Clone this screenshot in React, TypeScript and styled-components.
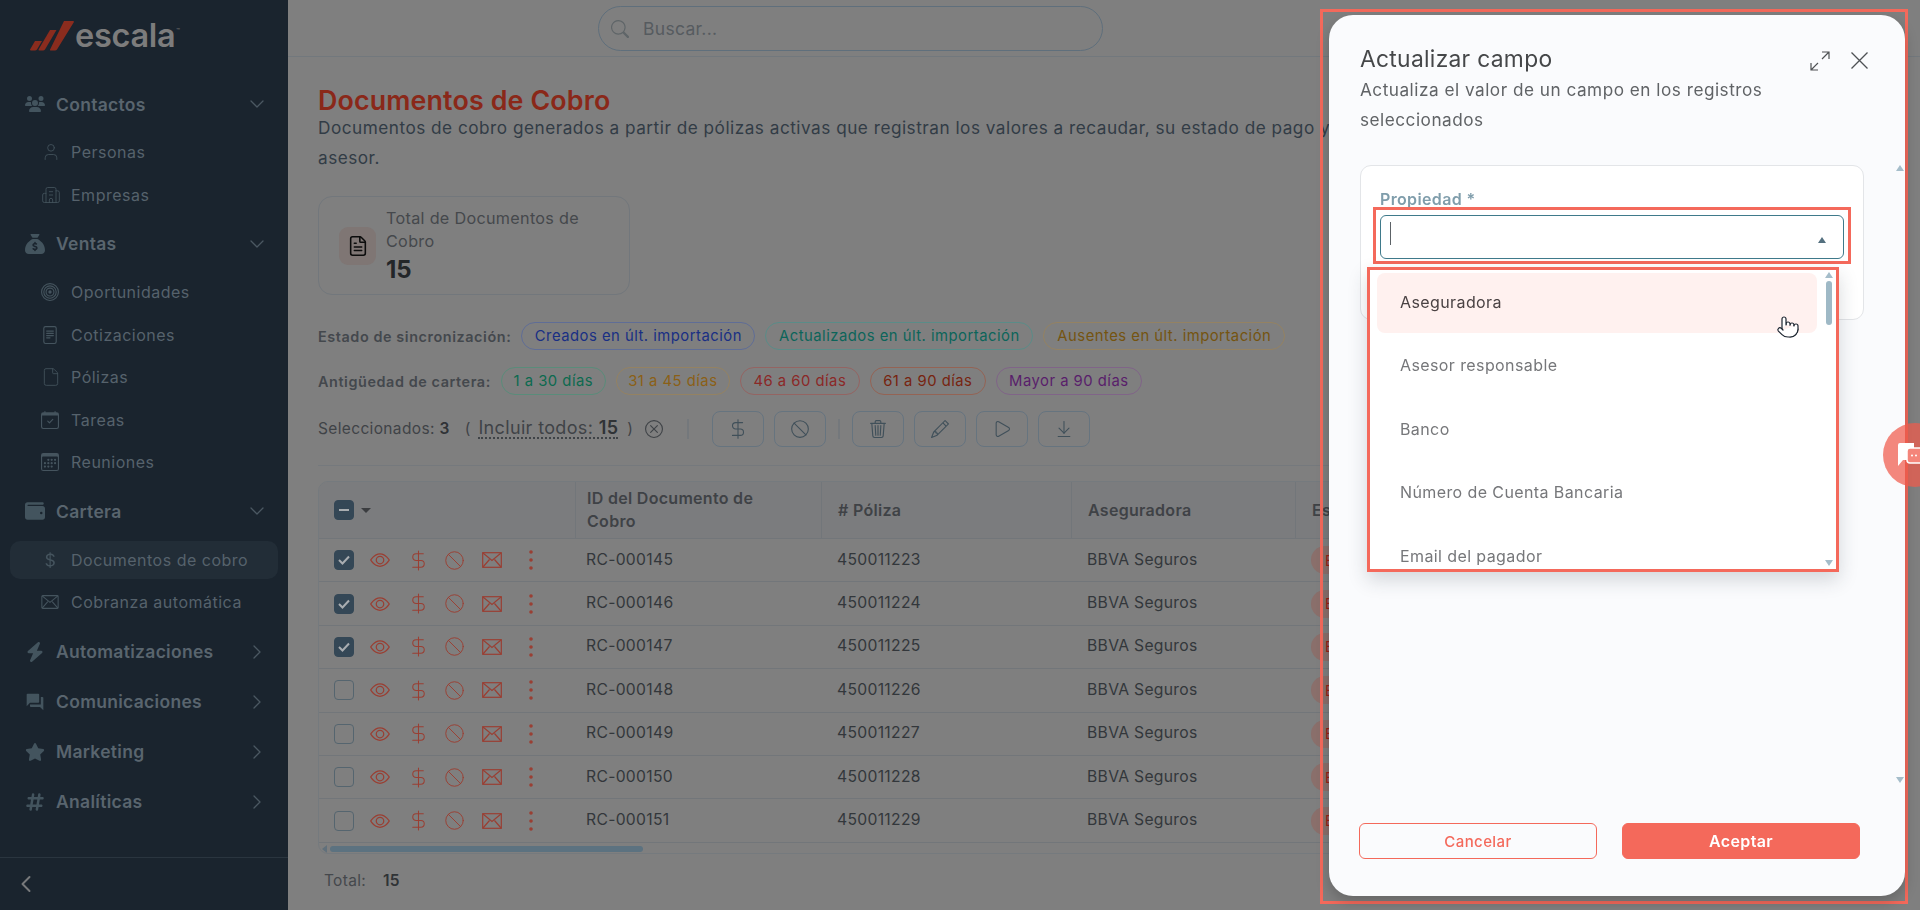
import React from 'react';
import styled, { createGlobalStyle } from 'styled-components';
import {
  BsBullseye, BsCalendar3, BsCalendarCheck, BsCurrencyDollar, BsEye, BsFileText, BsPencil, BsSearch, BsTrash3, BsXCircle,
} from 'react-icons/bs';
import { FaBolt, FaHashtag, FaSackDollar, FaStar, FaUsers, FaWallet } from 'react-icons/fa6';
import { MdForum } from 'react-icons/md';
import {
  ArrowDownToLine, Ban, Building2, ChevronDown, ChevronLeft, ChevronRight, DollarSign, File, FileText, Play, Pointer, User,
} from 'lucide-react';

const GlobalStyle = createGlobalStyle`
  html, body {
    margin: 0;
    height: 100%;
    overflow: hidden;
    background: #7f7f7f;
    font-family: Inter, "Liberation Sans", sans-serif;
  }
  * { box-sizing: border-box; }
`;

const Shell = styled.div`
  display: flex;
  width: 1920px;
  height: 910px;
  overflow: hidden;
`;

const Sidebar = styled.aside`
  width: 288px;
  flex: none;
  height: 910px;
  background: #1a242e;
  display: flex;
  flex-direction: column;
`;

const LogoRow = styled.div`
  height: 84px;
  padding: 21px 0 0 30px;
  display: flex;
  align-items: flex-start;
  gap: 1px;
`;

const LogoWord = styled.span`
  font-size: 32.5px;
  line-height: 31px;
  font-weight: 600;
  color: #7c7c7c;
  letter-spacing: -0.3px;
  margin-top: -1px;
`;

const LogoTm = styled.sup`
  font-size: 6px;
  line-height: 1;
  color: #7c7c7c;
  margin: 7px 0 0 0;
`;

const SectionRow = styled.div<{ $h: number; $mt?: number; $mb?: number }>`
  height: ${(p) => p.$h}px;
  margin: ${(p) => p.$mt ?? 0}px 0 ${(p) => p.$mb ?? 0}px;
  display: flex;
  align-items: center;
  padding: 0 19px 0 25px;
  color: #59656e;
  font-size: 17.5px;
  font-weight: 600;
`;

const SectionIcon = styled.span`
  width: 31px;
  display: flex;
  align-items: center;
  color: #43545e;
  font-size: 20px;
`;

const SectionLabel = styled.span`
  flex: 1;
  letter-spacing: 0.3px;
`;

const SubRow = styled.div<{ $active?: boolean }>`
  height: 38px;
  margin: 2px 10px 2.5px;
  padding: 0 0 0 31px;
  display: flex;
  align-items: center;
  border-radius: 10px;
  background: ${(p) => (p.$active ? '#222d37' : 'transparent')};
  color: #56626c;
  font-size: 16px;
  letter-spacing: 0.5px;
`;

const SubIcon = styled.span`
  width: 30px;
  display: flex;
  color: #45545e;
  font-size: 18px;
`;

const SideFooter = styled.div`
  margin-top: auto;
  height: 53px;
  border-top: 1px solid #2a353f;
  padding-left: 12px;
  display: flex;
  align-items: center;
  color: #77797b;
`;

const Main = styled.main`
  flex: 1;
  min-width: 0;
  background: #7f7f7f;
`;

const TopBar = styled.header`
  height: 57px;
  border-bottom: 1px solid #72787d;
  padding: 6px 0 0 310px;
`;

const SearchBox = styled.div`
  width: 505px;
  height: 45px;
  border: 1px solid #5f6f7c;
  border-radius: 23px;
  display: flex;
  align-items: center;
  gap: 14px;
  padding-left: 12px;
  color: #565b5f;
  font-size: 17.5px;
  letter-spacing: 0.3px;
`;

const Content = styled.div`
  padding: 28px 0 0 30px;
  width: 1632px;
`;

const Title = styled.h1`
  margin: 0;
  height: 30px;
  font-size: 26.8px;
  line-height: 30px;
  font-weight: 600;
  color: #8a2819;
  letter-spacing: 0.15px;
`;

const Description = styled.p`
  margin: -2px 0 0;
  white-space: nowrap;
  font-size: 17.2px;
  line-height: 30px;
  color: #323c46;
  letter-spacing: 0.5px;
`;

const StatCard = styled.div`
  margin-top: 23px;
  width: 312px;
  height: 99px;
  border: 1px solid #72777c;
  border-radius: 14px;
  display: flex;
  align-items: center;
  padding-left: 20px;
  gap: 10px;
`;

const StatIcon = styled.div`
  width: 37px;
  height: 38px;
  border-radius: 9px;
  background: #7f7674;
  color: #0c0c0c;
  display: flex;
  align-items: center;
  justify-content: center;
`;

const StatLabel = styled.div`
  width: 240px;
  font-size: 16.2px;
  line-height: 23px;
  color: #45484c;
  letter-spacing: 0.3px;
`;

const StatValue = styled.div`
  margin-top: 3px;
  font-size: 24px;
  line-height: 28px;
  font-weight: 700;
  color: #232629;
`;

const ChipRow = styled.div<{ $top: number }>`
  margin-top: ${(p) => p.$top}px;
  display: flex;
  align-items: center;
  gap: 10px;
  height: 28px;
`;

const ChipLabel = styled.span`
  font-size: 14.4px;
  font-weight: 600;
  color: #44484d;
  letter-spacing: 0.58px;
`;

const Chip = styled.span<{ $c: string; $b: string; $w: number }>`
  width: ${(p) => p.$w}px;
  height: 28px;
  border: 1px solid ${(p) => p.$b};
  border-radius: 14px;
  color: ${(p) => p.$c};
  font-size: 14.8px;
  letter-spacing: 0.5px;
  display: flex;
  align-items: center;
  justify-content: center;
  white-space: nowrap;
`;

const ActionRow = styled.div`
  margin-top: 15px;
  height: 37px;
  display: flex;
  align-items: center;
  font-size: 15.5px;
  color: #3f4347;
  letter-spacing: 0.35px;
  white-space: nowrap;
`;

const Strong = styled.b`
  font-weight: 600;
  color: #303336;
`;

const OpenParen = styled.span`
  margin-left: 15px;
`;

const Dotted = styled.span`
  border-bottom: 2px dotted #3f4347;
  line-height: 19px;
  font-size: 18px;
  margin: 0 9px 0 3px;
`;

const Sep = styled.span<{ $ml: number; $mr: number }>`
  width: 2px;
  height: 20px;
  background: #74787c;
  margin: 0 ${(p) => p.$mr}px 0 ${(p) => p.$ml}px;
`;

const ToolButton = styled.button<{ $mr?: number }>`
  width: 52px;
  height: 36px;
  margin-right: ${(p) => p.$mr ?? 10}px;
  padding: 0;
  border: 1px solid #66747f;
  border-radius: 8px;
  background: transparent;
  color: #40505a;
  font-size: 18px;
  display: flex;
  align-items: center;
  justify-content: center;
`;

const Rule = styled.hr`
  margin: 18px 0 15px;
  border: 0;
  border-top: 1px solid #75797d;
`;

const TableWrap = styled.div`
  width: 1590px;
  height: 373px;
  border: 1px solid #757a7e;
  border-radius: 10px;
  overflow: hidden;
`;

const HeadRow = styled.div`
  display: grid;
  grid-template-columns: 256px 246px 250px 224px 1fr;
  height: 57px;
  background: #7b7c7e;
  border-bottom: 1px solid #72767a;
`;

const HeadCell = styled.div<{ $pl?: number }>`
  padding: 0 40px 0 ${(p) => p.$pl ?? 11}px;
  border-left: 1px solid #72767a;
  display: flex;
  align-items: center;
  font-size: 16px;
  line-height: 23px;
  font-weight: 600;
  color: #3f4246;
  letter-spacing: 0.3px;
`;

const PickCell = styled.div`
  display: flex;
  align-items: center;
  padding-left: 15px;
  gap: 7px;
`;

const BodyRow = styled.div`
  display: grid;
  grid-template-columns: 256px 246px 250px 224px 1fr;
  height: 43.4px;
  border-bottom: 1px solid #72767a;
`;

const RowTools = styled.div`
  display: flex;
  align-items: center;
  padding-left: 15px;
  color: #9a3f33;
`;

const Check = styled.span<{ $on?: boolean; $mr?: number }>`
  width: 20px;
  height: 20px;
  border-radius: 4px;
  margin-right: ${(p) => p.$mr ?? 16}px;
  border: 1px solid ${(p) => (p.$on ? '#344756' : '#55656f')};
  background: ${(p) => (p.$on ? '#344756' : 'transparent')};
  display: flex;
  align-items: center;
  justify-content: center;
`;

const HeadCaret = styled.span`
  width: 0;
  height: 0;
  border-left: 5px solid transparent;
  border-right: 5px solid transparent;
  border-top: 5px solid #3b3d40;
`;

const ToolSlot = styled.span<{ $w: number }>`
  width: ${(p) => p.$w}px;
  display: flex;
  align-items: center;
  justify-content: flex-start;
  font-size: 20px;
`;

const Cell = styled.div<{ $pl?: number }>`
  padding: 0 0 2px ${(p) => p.$pl ?? 11}px;
  display: flex;
  align-items: center;
  font-size: 15.7px;
  color: #33373b;
  letter-spacing: 0.3px;
`;

const StatusPill = styled.span`
  height: 28px;
  padding: 0 14px;
  border-radius: 14px;
  background: #8a6f6b;
  color: #9a1f14;
  font-size: 14px;
  display: flex;
  align-items: center;
  margin-top: 2px;
`;

const HScroll = styled.div`
  height: 12px;
  display: flex;
  align-items: center;
  padding-left: 3px;
  gap: 3px;
`;

const ArrowLeft = styled.span`
  width: 0;
  height: 0;
  border-top: 4px solid transparent;
  border-bottom: 4px solid transparent;
  border-right: 5px solid #61707b;
`;

const HThumb = styled.span`
  width: 313px;
  height: 6px;
  border-radius: 3px;
  background: #5c7280;
`;

const TotalRow = styled.div`
  margin-top: 17px;
  padding-left: 6px;
  display: flex;
  gap: 17px;
  font-size: 15.5px;
  color: #45484c;
  letter-spacing: 0.3px;
`;

const ModalFrame = styled.div`
  position: fixed;
  left: 1320px;
  top: 9px;
  width: 588px;
  height: 895px;
  border: 3px solid #f4695b;
  padding: 3px 0 5px 6px;
  z-index: 10;
`;

const Modal = styled.section`
  position: relative;
  width: 576px;
  height: 881px;
  border-radius: 24px;
  background: #fafbfd;
  box-shadow: 0 6px 14px rgba(0, 0, 0, 0.2);
  display: flex;
  flex-direction: column;
  padding: 30px 0 37px 31px;
`;

const ModalHead = styled.div`
  display: flex;
  align-items: flex-start;
`;

const ModalTitle = styled.h2`
  flex: 1;
  margin: 0;
  font-size: 22.8px;
  line-height: 28px;
  font-weight: 400;
  color: #454749;
  letter-spacing: 0.3px;
`;

const HeadButton = styled.span<{ $mr: number }>`
  display: flex;
  color: #4e5154;
  margin: 6px ${(p) => p.$mr}px 0 0;
`;

const ModalSub = styled.p`
  margin: 2px 0 0;
  width: 450px;
  font-size: 17.2px;
  line-height: 30px;
  color: #606366;
  letter-spacing: 0.5px;
`;

const FormCard = styled.div`
  margin-top: 30px;
  width: 504px;
  height: 155px;
  background: #fff;
  border: 1px solid #e3e5e8;
  border-radius: 11px;
  padding: 24px 0 0 12px;
`;

const FieldLabel = styled.label`
  display: block;
  margin-left: 7px;
  height: 18px;
  font-size: 16px;
  line-height: 18px;
  font-weight: 600;
  color: #7f9dab;
  letter-spacing: 0.35px;
`;

const FieldMark = styled.div`
  position: relative;
  width: 478px;
  height: 57px;
  margin-top: -1px;
  border: 3px solid #f4695b;
  padding: 5px 4px 2px;
`;

const FieldInput = styled.div`
  height: 44px;
  border: 1px solid #3f7a8b;
  border-radius: 6px;
  background: #fff;
  display: flex;
  align-items: flex-start;
  justify-content: space-between;
  padding: 6px 17px 0 9px;
`;

const Caret = styled.span`
  width: 1px;
  height: 23px;
  background: #5c6266;
`;

const UpArrow = styled.span<{ $c: string; $mt?: number }>`
  width: 0;
  height: 0;
  margin-top: ${(p) => p.$mt ?? 0}px;
  border-left: 4px solid transparent;
  border-right: 4px solid transparent;
  border-bottom: 6px solid ${(p) => p.$c};
`;

const DownArrow = styled.span<{ $c: string }>`
  display: block;
  width: 0;
  height: 0;
  border-left: 4px solid transparent;
  border-right: 4px solid transparent;
  border-top: 6px solid ${(p) => p.$c};
`;

const Dropdown = styled.div`
  position: absolute;
  left: -9px;
  top: 57px;
  width: 472px;
  height: 305px;
  border: 3px solid #f4695b;
  background: #fff;
  box-shadow: 0 8px 18px rgba(40, 50, 60, 0.18);
  padding-top: 3px;
  overflow: hidden;
  z-index: 2;
`;

const Option = styled.div<{ $hover?: boolean }>`
  width: 440px;
  height: 60px;
  margin: 0 0 3.6px 7px;
  padding: 0 0 3px 23px;
  border-radius: 8px;
  background: ${(p) => (p.$hover ? '#fff1ef' : 'transparent')};
  color: ${(p) => (p.$hover ? '#4a4243' : '#76777a')};
  font-size: 16px;
  letter-spacing: 0.4px;
  display: flex;
  align-items: center;
`;

const HandCursor = styled.span`
  position: absolute;
  left: 406px;
  top: 45px;
  display: flex;
  color: #1c2530;
`;

const ListScroll = styled.div`
  position: absolute;
  right: 2px;
  top: 0;
  bottom: 0;
  width: 10px;
  display: flex;
  flex-direction: column;
  align-items: center;
  padding-top: 2px;
`;

const ListThumb = styled.span`
  width: 6px;
  height: 44px;
  margin-top: 3px;
  border-radius: 3px;
  background: #9fb9c6;
`;

const ListDown = styled.span`
  display: flex;
  margin-top: auto;
  margin-bottom: 3px;
`;

const ModalScroll = styled.div`
  position: absolute;
  left: 567px;
  top: 150px;
  height: 618px;
  display: flex;
  flex-direction: column;
  justify-content: space-between;
`;

const ModalFoot = styled.div`
  margin-top: auto;
  margin-left: -1px;
  display: flex;
  gap: 25px;
`;

const FootButton = styled.button<{ $fill?: boolean }>`
  width: 238px;
  height: 36px;
  border-radius: 6px;
  border: 1px solid #f4695b;
  background: ${(p) => (p.$fill ? '#f4695b' : 'transparent')};
  color: ${(p) => (p.$fill ? '#fff' : '#f4695b')};
  font-family: inherit;
  font-size: ${(p) => (p.$fill ? 16 : 15)}px;
  font-weight: ${(p) => (p.$fill ? 600 : 500)};
  letter-spacing: 0.4px;
`;

const ChatBubble = styled.div`
  position: fixed;
  left: 1883px;
  top: 423px;
  width: 64px;
  height: 64px;
  border-radius: 50%;
  background: rgba(240, 90, 75, 0.72);
  z-index: 20;
  padding: 20px 0 0 15px;
  display: flex;
`;

const LogoMark = () => (
  <svg width="44" height="30" viewBox="0 0 44 30" fill="#8a2c1e">
    <path d="M5 20h7L7 28.5q-.6 1-2 1H1q-1.5 0-.8-1.2z" />
    <path d="M20 9h6.500L15 28.500q-.6 1-2 1H9.500q-1.500 0-.8-1.200z" />
    <path d="M34 0h9q1.500 0 .8 1.200L27 28.500q-.6 1-2 1h-4q-1.500 0-.8-1.200z" />
  </svg>
);

const MailIcon = () => (
  <svg width="20" height="16" viewBox="0 0 20 16" fill="none" stroke="currentColor" strokeWidth="1.200">
    <rect x="0.7" y="0.7" width="18.600" height="14.600" />
    <path d="M1 1l9 7.500L19 1M1 15l6.500-7.500M19 15l-6.500-7.500" />
  </svg>
);

const SidebarMail = () => (
  <svg width="18" height="14" viewBox="0 0 20 16" fill="none" stroke="currentColor" strokeWidth="1.200">
    <rect x="0.700" y="0.700" width="18.600" height="14.600" rx="1" />
    <path d="M1 1l9 7.500L19 1M1 15l6.500-7.500M19 15l-6.500-7.500" />
  </svg>
);

const CheckMark = () => (
  <svg width="12" height="10" viewBox="0 0 12 10" fill="none" stroke="#a9adb1" strokeWidth="2">
    <path d="M1 5l3.500 3.500L11 1.500" />
  </svg>
);

const RowDots = () => (
  <svg width="6" height="20" viewBox="0 0 6 20" fill="currentColor">
    <circle cx="3" cy="2" r="1.800" />
    <circle cx="3" cy="10" r="1.800" />
    <circle cx="3" cy="18" r="1.800" />
  </svg>
);

const ExpandIcon = () => (
  <svg width="20" height="20" viewBox="0 0 20 20" fill="none" stroke="currentColor" strokeWidth="1.200">
    <path d="M1 19L8 12M12 8L19 1M12 1H19V8M1 12V19H8" />
  </svg>
);

const CloseIcon = () => (
  <svg width="19" height="19" viewBox="0 0 19 19" fill="none" stroke="currentColor" strokeWidth="1.300">
    <path d="M1.500 1.500L17.500 17.500M17.500 1.500L1.500 17.500" />
  </svg>
);

const chevronStyle = { color: '#4b5862' };

const Section = ({ icon, label, open, h, mt, mb }: { icon: React.ReactNode; label: string; open?: boolean; h: number; mt?: number; mb?: number }) => (
  <SectionRow $h={h} $mt={mt} $mb={mb}>
    <SectionIcon>{icon}</SectionIcon>
    <SectionLabel>{label}</SectionLabel>
    {open ? (
      <ChevronDown size={24} strokeWidth={1.300} style={chevronStyle} />
    ) : (
      <ChevronRight size={24} strokeWidth={1.300} style={chevronStyle} />
    )}
  </SectionRow>
);

const Sub = ({ icon, label, active }: { icon: React.ReactNode; label: string; active?: boolean }) => (
  <SubRow $active={active}>
    <SubIcon>{icon}</SubIcon>
    {label}
  </SubRow>
);

const rows = [
  ['RC-000145', '450011223', true],
  ['RC-000146', '450011224', true],
  ['RC-000147', '450011225', true],
  ['RC-000148', '450011226', false],
  ['RC-000149', '450011227', false],
  ['RC-000150', '450011228', false],
  ['RC-000151', '450011229', false],
] as const;

const options = ['Aseguradora', 'Asesor responsable', 'Banco', 'Número de Cuenta Bancaria', 'Email del pagador'];

export default function App() {
  return (
    <Shell>
      <GlobalStyle />
      <Sidebar>
        <LogoRow>
          <LogoMark />
          <LogoWord>escala</LogoWord>
          <LogoTm>™</LogoTm>
        </LogoRow>
        <Section icon={<FaUsers />} label="Contactos" open h={40} mb={7} />
        <Sub icon={<User size={20} strokeWidth={1} />} label="Personas" />
        <Sub icon={<Building2 size={20} strokeWidth={1} />} label="Empresas" />
        <Section icon={<FaSackDollar />} label="Ventas" open h={43} mt={6} mb={6} />
        <Sub icon={<BsBullseye />} label="Oportunidades" />
        <Sub icon={<BsFileText />} label="Cotizaciones" />
        <Sub icon={<File size={20} strokeWidth={1} />} label="Pólizas" />
        <Sub icon={<BsCalendarCheck />} label="Tareas" />
        <Sub icon={<BsCalendar3 />} label="Reuniones" />
        <Section icon={<FaWallet />} label="Cartera" open h={43} mt={6} mb={6} />
        <Sub icon={<BsCurrencyDollar />} label="Documentos de cobro" active />
        <Sub icon={<SidebarMail />} label="Cobranza automática" />
        <Section icon={<FaBolt />} label="Automatizaciones" h={50} mt={3} />
        <Section icon={<MdForum />} label="Comunicaciones" h={50} />
        <Section icon={<FaStar />} label="Marketing" h={50} />
        <Section icon={<FaHashtag />} label="Analíticas" h={50} />
        <SideFooter>
          <ChevronLeft size={28} strokeWidth={1.700} />
        </SideFooter>
      </Sidebar>

      <Main>
        <TopBar>
          <SearchBox>
            <BsSearch size={18} color="#5f6568" />
            Buscar...
          </SearchBox>
        </TopBar>
        <Content>
          <Title>Documentos de Cobro</Title>
          <Description>
            Documentos de cobro generados a partir de pólizas activas que registran los valores a recaudar, su estado de
            pago y la comisión del
            <br />
            asesor.
          </Description>
          <StatCard>
            <StatIcon>
              <FileText size={22} strokeWidth={1.700} />
            </StatIcon>
            <div>
              <StatLabel>Total de Documentos de Cobro</StatLabel>
              <StatValue>15</StatValue>
            </div>
          </StatCard>

          <ChipRow $top={27}>
            <ChipLabel>Estado de sincronización:</ChipLabel>
            <Chip $c="#192f84" $b="#5f6d96" $w={234}>Creados en últ. importación</Chip>
            <Chip $c="#0c655a" $b="#5a8c88" $w={268}>Actualizados en últ. importación</Chip>
            <Chip $c="#755410" $b="#948262" $w={242}>Ausentes en últ. importación</Chip>
          </ChipRow>
          <ChipRow $top={17}>
            <ChipLabel>Antigüedad de cartera:</ChipLabel>
            <Chip $c="#0c6a4f" $b="#5a8c7a" $w={105}>1 a 30 días</Chip>
            <Chip $c="#8b6016" $b="#948262" $w={114}>31 a 45 días</Chip>
            <Chip $c="#8b2827" $b="#946462" $w={120}>46 a 60 días</Chip>
            <Chip $c="#772410" $b="#946354" $w={116}>61 a 90 días</Chip>
            <Chip $c="#591e6b" $b="#806488" $w={146}>Mayor a 90 días</Chip>
          </ChipRow>

          <ActionRow>
            Seleccionados:&nbsp;<Strong>3</Strong>
            <OpenParen>(</OpenParen>&nbsp;
            <Dotted>
              Incluir todos: <Strong>15</Strong>
            </Dotted>
            )
            <BsXCircle size={18} style={{ marginLeft: 12 }} />
            <Sep $ml={24} $mr={23} />
            <ToolButton><DollarSign size={22} strokeWidth={1.200} /></ToolButton>
            <ToolButton $mr={12}><Ban size={20} strokeWidth={1.300} /></ToolButton>
            <Sep $ml={0} $mr={12} />
            <ToolButton><BsTrash3 /></ToolButton>
            <ToolButton><BsPencil /></ToolButton>
            <ToolButton><Play size={20} strokeWidth={1.300} /></ToolButton>
            <ToolButton><ArrowDownToLine size={20} strokeWidth={1.300} /></ToolButton>
          </ActionRow>
          <Rule />

          <TableWrap>
            <HeadRow>
              <PickCell>
                <Check $on $mr={0}>
                  <svg width="10" height="2"><rect width="10" height="2" fill="#a9adb1" /></svg>
                </Check>
                <HeadCaret />
              </PickCell>
              <HeadCell>ID del Documento de Cobro</HeadCell>
              <HeadCell $pl={16}># Póliza</HeadCell>
              <HeadCell $pl={16}>Aseguradora</HeadCell>
              <HeadCell $pl={16}>Estado</HeadCell>
            </HeadRow>
            {rows.map(([id, poliza, on]) => (
              <BodyRow key={id}>
                <RowTools>
                  <Check $on={on}>{on && <CheckMark />}</Check>
                  <ToolSlot $w={37}><BsEye /></ToolSlot>
                  <ToolSlot $w={37}><DollarSign size={23} strokeWidth={1.100} /></ToolSlot>
                  <ToolSlot $w={38}><Ban size={21} strokeWidth={1.100} /></ToolSlot>
                  <ToolSlot $w={46}><MailIcon /></ToolSlot>
                  <ToolSlot $w={20}><RowDots /></ToolSlot>
                </RowTools>
                <Cell>{id}</Cell>
                <Cell $pl={16}>{poliza}</Cell>
                <Cell $pl={16}>BBVA Seguros</Cell>
                <Cell $pl={16}>
                  <StatusPill>Emitido</StatusPill>
                </Cell>
              </BodyRow>
            ))}
            <HScroll>
              <ArrowLeft />
              <HThumb />
            </HScroll>
          </TableWrap>
          <TotalRow>
            Total: <Strong>15</Strong>
          </TotalRow>
        </Content>
      </Main>

      <ModalFrame>
        <Modal>
          <ModalHead>
            <ModalTitle>Actualizar campo</ModalTitle>
            <HeadButton $mr={20}><ExpandIcon /></HeadButton>
            <HeadButton $mr={36}><CloseIcon /></HeadButton>
          </ModalHead>
          <ModalSub>Actualiza el valor de un campo en los registros seleccionados</ModalSub>
          <FormCard>
            <FieldLabel>Propiedad *</FieldLabel>
            <FieldMark>
              <FieldInput>
                <Caret />
                <UpArrow $c="#54707f" $mt={15} />
              </FieldInput>
              <Dropdown>
                {options.map((o, i) => (
                  <Option key={o} $hover={i === 0}>{o}</Option>
                ))}
                <ListScroll>
                  <UpArrow $c="#a5bdca" />
                  <ListThumb />
                  <ListDown><DownArrow $c="#a5bdca" /></ListDown>
                </ListScroll>
                <HandCursor>
                  <Pointer size={24} strokeWidth={1.200} fill="#fff" />
                </HandCursor>
              </Dropdown>
            </FieldMark>
          </FormCard>
          <ModalFoot>
            <FootButton>Cancelar</FootButton>
            <FootButton $fill>Aceptar</FootButton>
          </ModalFoot>
          <ModalScroll>
            <UpArrow $c="#a5bdca" />
            <DownArrow $c="#a5bdca" />
          </ModalScroll>
        </Modal>
      </ModalFrame>

      <ChatBubble>
        <svg width="30" height="24" viewBox="0 0 30 24">
          <path d="M0 2q0-2 2-2h14v17H5l-5 6z" fill="#fff" />
          <rect x="9" y="5" width="20" height="15" rx="3" fill="#f4857a" stroke="#fff" strokeWidth="1.500" />
          <circle cx="14" cy="12.500" r="1" fill="#fff" />
          <circle cx="18" cy="12.500" r="1" fill="#fff" />
        </svg>
      </ChatBubble>
    </Shell>
  );
}
